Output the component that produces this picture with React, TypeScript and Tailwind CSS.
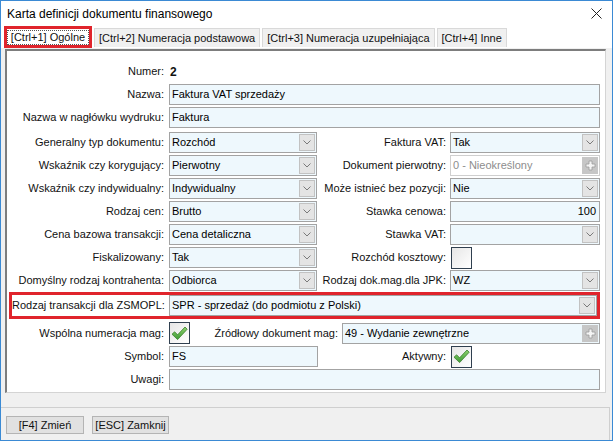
import React from "react";
import clsx from "clsx";

const Chevron = () => (
  <svg width="8" height="5" viewBox="0 0 8 5">
    <polyline points="0.5,0.5 4,4 7.5,0.5" fill="none" stroke="#7a7a7a" strokeWidth="1" />
  </svg>
);

const DropBtn = () => (
  <div className="w-[16px] h-[17px] mr-[1px] bg-[#e4e4e4] border border-[#c2c2c2] flex items-center justify-center shrink-0">
    <Chevron />
  </div>
);

const PlusBtn = () => (
  <div className="w-[16px] h-[17px] mr-[1px] bg-[#c6c6c6] flex items-center justify-center shrink-0">
    <svg width="11" height="11" viewBox="0 0 11 11">
      <path
        d="M4 1h3v3h3v3H7v3H4V7H1V4h3z"
        fill="#f4f4f4"
        stroke="#9d9d9d"
        strokeWidth="0.8"
      />
    </svg>
  </div>
);

const Field = ({
  value,
  className,
  right,
  combo,
  plus,
  disabled,
}: {
  value?: string;
  className?: string;
  right?: boolean;
  combo?: boolean;
  plus?: boolean;
  disabled?: boolean;
}) => (
  <div
    className={clsx(
      "h-[21px] border flex items-center",
      disabled ? "bg-white border-[#cfcfcf] text-[#8d8d8d]" : "bg-[#eef8fd] border-[#a3a3a3] text-black",
      className
    )}
  >
    <span className={clsx("flex-1 px-[2px] truncate", right && "text-right pr-[3px]")}>{value}</span>
    {combo && <DropBtn />}
    {plus && <PlusBtn />}
  </div>
);

const Check = ({ checked }: { checked?: boolean }) => (
  <div className="w-[21px] h-[22px] border border-[#2f3f4f] bg-gradient-to-br from-[#e6e6e6] to-white flex items-center justify-center shrink-0">
    {checked && (
      <svg width="17" height="15" viewBox="0 0 17 15">
        <defs>
          <linearGradient id="g" x1="0" y1="0" x2="0" y2="1">
            <stop offset="0" stopColor="#8ed26e" />
            <stop offset="1" stopColor="#3c9a34" />
          </linearGradient>
        </defs>
        <path
          d="M1 8.2 L3.6 5.8 L6.6 8.8 L14 1 L16.2 3.2 L6.6 13.6 Z"
          fill="url(#g)"
          stroke="#3a7d2c"
          strokeWidth="0.8"
          strokeLinejoin="round"
        />
      </svg>
    )}
  </div>
);

const Label = ({ children, className }: { children: React.ReactNode; className?: string }) => (
  <div className={clsx("text-right whitespace-nowrap", className)}>{children}</div>
);

const Row = ({ children, className }: { children: React.ReactNode; className?: string }) => (
  <div className={clsx("flex items-center h-[21px]", className)}>{children}</div>
);

const TwoCol = ({
  label,
  left,
  rlabel,
  right,
}: {
  label: string;
  left: React.ReactNode;
  rlabel: string;
  right: React.ReactNode;
}) => (
  <Row>
    <Label className="w-[157px]">{label}</Label>
    <div className="w-[148px] ml-[5px]">{left}</div>
    <Label className="flex-1 pr-[4px]">{rlabel}</Label>
    <div className="w-[150px]">{right}</div>
  </Row>
);

const tabs = [
  "[Ctrl+2] Numeracja podstawowa",
  "[Ctrl+3] Numeracja uzupełniająca",
  "[Ctrl+4] Inne",
];

export default function App() {
  return (
    <div className="w-[613px] h-[441px] border border-[#3b8ad4] bg-[#f0f0f0] flex flex-col text-[11px] text-[#111] font-['Liberation_Sans',Arial,sans-serif] overflow-hidden">
      {/* title bar */}
      <div className="h-[25px] bg-white flex items-center justify-between pl-[6px] pr-[10px] shrink-0">
        <span className="text-[12px] text-black">Karta definicji dokumentu finansowego</span>
        <svg width="11" height="11" viewBox="0 0 11 11">
          <path d="M0.5 0.5 L10.5 10.5 M10.5 0.5 L0.5 10.5" stroke="#222" strokeWidth="1" />
        </svg>
      </div>

      {/* tabs */}
      <div className="h-[22px] bg-white flex items-end pl-[3px] shrink-0">
        <div className="w-[88px] h-[22px] border-[3px] border-[#e0242c] bg-white flex items-center justify-center shrink-0">
          <span className="border border-dotted border-[#555] leading-[13px] whitespace-nowrap px-[3px]">
            [Ctrl+1] Ogólne
          </span>
        </div>
        {tabs.map((t) => (
          <div
            key={t}
            className="h-[19px] ml-[2px] mb-[1px] bg-[#f0f0f0] border border-[#d9d9d9] border-b-0 flex items-center px-[4px] whitespace-nowrap"
          >
            {t}
          </div>
        ))}
      </div>

      {/* panel */}
      <div className="ml-[4px] mr-[6px] mt-[1px] bg-white border-t-2 border-l-2 border-[#7d7d7d] border-r border-b border-r-[#d4d4d4] border-b-[#d4d4d4] pt-[10px] pr-[5px] pb-[2px] flex flex-col">
        <Row>
          <Label className="w-[157px]">Numer:</Label>
          <span className="ml-[6px] font-bold text-[12px]">2</span>
        </Row>
        <Row className="mt-[2px]">
          <Label className="w-[157px]">Nazwa:</Label>
          <Field className="flex-1 ml-[5px]" value="Faktura VAT sprzedaży" />
        </Row>
        <Row className="mt-[2px]">
          <Label className="w-[157px]">Nazwa w nagłówku wydruku:</Label>
          <Field className="flex-1 ml-[5px]" value="Faktura" />
        </Row>
        <div className="mt-[4px] flex flex-col gap-[2px]">
          <TwoCol
            label="Generalny typ dokumentu:"
            left={<Field value="Rozchód" combo />}
            rlabel="Faktura VAT:"
            right={<Field value="Tak" combo />}
          />
          <TwoCol
            label="Wskaźnik czy korygujący:"
            left={<Field value="Pierwotny" combo />}
            rlabel="Dokument pierwotny:"
            right={<Field value="0 - Nieokreślony" plus disabled />}
          />
          <TwoCol
            label="Wskaźnik czy indywidualny:"
            left={<Field value="Indywidualny" combo />}
            rlabel="Może istnieć bez pozycji:"
            right={<Field value="Nie" combo />}
          />
          <TwoCol
            label="Rodzaj cen:"
            left={<Field value="Brutto" combo />}
            rlabel="Stawka cenowa:"
            right={<Field value="100" right />}
          />
          <TwoCol
            label="Cena bazowa transakcji:"
            left={<Field value="Cena detaliczna" combo />}
            rlabel="Stawka VAT:"
            right={<Field value="" combo />}
          />
          <TwoCol
            label="Fiskalizowany:"
            left={<Field value="Tak" combo />}
            rlabel="Rozchód kosztowy:"
            right={
              <div className="pl-[1px]">
                <Check />
              </div>
            }
          />
          <TwoCol
            label="Domyślny rodzaj kontrahenta:"
            left={<Field value="Odbiorca" combo />}
            rlabel="Rodzaj dok.mag.dla JPK:"
            right={<Field value="WZ" combo />}
          />
        </div>

        {/* highlighted row */}
        <div className="mt-[1px] ml-[2px] border-[3px] border-[#e0242c] flex items-center h-[27px]">
          <Label className="w-[152px]">Rodzaj transakcji dla ZSMOPL:</Label>
          <Field className="flex-1 ml-[5px]" value="SPR - sprzedaż (do podmiotu z Polski)" combo />
        </div>

        <div className="mt-[3px] flex items-center h-[22px]">
          <Label className="w-[157px]">Wspólna numeracja mag:</Label>
          <div className="ml-[5px]">
            <Check checked />
          </div>
          <Label className="flex-1 pr-[4px]">Źródłowy dokument mag:</Label>
          <Field className="w-[258px]" value="49 - Wydanie zewnętrzne" plus />
        </div>

        <Row className="mt-[2px]">
          <Label className="w-[157px]">Symbol:</Label>
          <Field className="w-[149px] ml-[5px]" value="FS" />
          <Label className="flex-1 pr-[4px]">Aktywny:</Label>
          <div className="w-[150px] pl-[1px]">
            <Check checked />
          </div>
        </Row>

        <Row className="mt-[2px]">
          <Label className="w-[157px]">Uwagi:</Label>
          <Field className="flex-1 ml-[5px]" value="" />
        </Row>
      </div>

      {/* footer */}
      <div className="mt-[14px] flex-1 border-t border-r border-[#cfcfcf] mr-[2px] flex items-start gap-[8px] pl-[5px] pt-[8px]">
        <button className="w-[78px] h-[18px] bg-[#e1e1e1] border border-[#b4b4b4] text-[11px] leading-none">
          [F4] Zmień
        </button>
        <button className="w-[77px] h-[18px] bg-[#e1e1e1] border border-[#b4b4b4] text-[11px] leading-none">
          [ESC] Zamknij
        </button>
      </div>
    </div>
  );
}
